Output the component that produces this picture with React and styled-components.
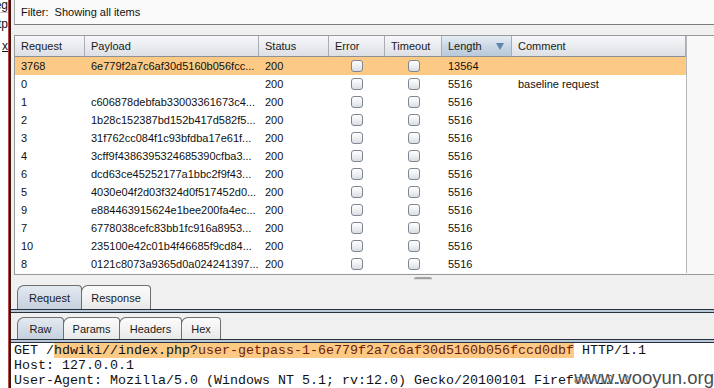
import React from "react";
import styled, { createGlobalStyle } from "styled-components";

const GlobalStyle = createGlobalStyle`
  html, body {
    margin: 0;
    padding: 0;
    width: 714px;
    height: 388px;
    overflow: hidden;
    background: #ffffff;
    font-family: "Liberation Sans", Arial, sans-serif;
  }
`;

const Frame = styled.div`
  position: relative;
  display: flex;
  width: 714px;
  height: 388px;
  overflow: hidden;
`;

const SideStrip = styled.div`
  width: 8px;
  flex-shrink: 0;
  display: flex;
  flex-direction: column;
  background: #ffffff;
  overflow: hidden;
`;

const SideItem = styled.div`
  height: ${({ $h }) => $h}px;
  display: flex;
  justify-content: flex-end;
  align-items: ${({ $align }) => $align || "center"};
  font-size: 12px;
  color: #111;
  white-space: nowrap;
  border-bottom: ${({ $line }) => ($line ? "1px solid #c8c8c8" : "none")};
  text-decoration: ${({ $underline }) => ($underline ? "underline" : "none")};
`;

const Divider = styled.div`
  width: 3px;
  flex-shrink: 0;
  background: linear-gradient(to right, #b34a44 0, #b34a44 1px, #3e1612 1px);
`;

const Main = styled.div`
  flex: 1;
  min-width: 0;
  display: flex;
  flex-direction: column;
  background: #f0f0f0;
`;

const FilterBar = styled.div`
  height: 23px;
  margin-left: 3px;
  display: flex;
  align-items: center;
  padding-left: 6px;
  padding-bottom: 1px;
  background: #fafafa;
  border-left: 1px solid #a8a8a8;
  border-bottom: 1px solid #7c7c7c;
  font-size: 11px;
  color: #111;
  white-space: pre;
`;

const Table = styled.div`
  box-sizing: border-box;
  height: 240px;
  margin-top: 10px;
  margin-left: 3px;
  background: #f8f8f8;
  border-top: 1px solid #9a9a9a;
  border-left: 1px solid #9a9a9a;
  border-bottom: 1px solid #9a9a9a;
  overflow: hidden;
`;

const Grid = styled.div`
  display: grid;
  grid-template-columns: 70px 174px 70px 56px 57px 70px 174px;
  width: 671px;
  background: #ffffff;
  border-right: 1px solid #b8b8b8;
`;

const HeaderCell = styled.div`
  box-sizing: border-box;
  height: 21px;
  display: flex;
  align-items: center;
  justify-content: space-between;
  padding: 0 6px;
  font-size: 11px;
  color: #1a1a1a;
  border-right: 1px solid #a9adb3;
  border-bottom: 1px solid #8d9196;
  background: ${({ $sorted }) =>
    $sorted
      ? "linear-gradient(to bottom, #e6edf5 0%, #c9d6e4 55%, #b9c9da 100%)"
      : "linear-gradient(to bottom, #f7f8fa 0%, #e9ebef 55%, #dcdfe4 100%)"};
  &:last-child {
    border-right: none;
  }
`;

const SortArrow = styled.span`
  width: 0;
  height: 0;
  margin-right: 1px;
  border-left: 4px solid transparent;
  border-right: 4px solid transparent;
  border-top: 7px solid #5f84ad;
`;

const Cell = styled.div`
  height: 18px;
  display: flex;
  align-items: center;
  justify-content: ${({ $center }) => ($center ? "center" : "flex-start")};
  padding: 0 ${({ $center }) => ($center ? "0" : "6px")};
  font-size: 11px;
  color: #111;
  white-space: nowrap;
  overflow: hidden;
  background: ${({ $selected }) => ($selected ? "#fdca86" : "transparent")};
`;

const Checkbox = styled.span`
  box-sizing: border-box;
  width: 12px;
  height: 12px;
  border: 1px solid #7d8692;
  border-radius: 3px;
  background: linear-gradient(to bottom, #ffffff 0%, #eef0f3 50%, #d9dde2 100%);
`;

const Splitter = styled.div`
  height: 10px;
  display: flex;
  justify-content: center;
  padding-left: 120px;
`;

const Handle = styled.div`
  width: 18px;
  height: 2px;
  margin-top: 2px;
  border-radius: 2px 2px 0 0;
  background: #a4a4a4;
  border-bottom: 1px solid #dcdcdc;
`;

const TabBar = styled.div`
  height: ${({ $h }) => $h}px;
  margin-top: ${({ $gap }) => $gap}px;
  display: flex;
  align-items: flex-end;
  padding-left: 6px;
`;

const Tab = styled.div`
  box-sizing: border-box;
  width: ${({ $w }) => $w}px;
  height: 100%;
  display: flex;
  align-items: center;
  justify-content: center;
  margin-right: -1px;
  font-size: 11px;
  color: #1a1a1a;
  border: 1px solid #6f6f6f;
  border-bottom: none;
  border-radius: 7px 4px 0 0;
  background: ${({ $active }) =>
    $active
      ? "linear-gradient(to bottom, #e4eaf1 0%, #d1dae5 60%, #c6d1de 100%)"
      : "linear-gradient(to bottom, #fbfbfb 0%, #f1f1f1 60%, #e8e8e8 100%)"};
`;

const TabRule = styled.div`
  height: 2px;
  background: #b9c7d6;
  border-top: 1px solid #26313d;
  border-bottom: 1px solid #26313d;
`;

const Editor = styled.div`
  flex: 1;
  padding-left: 3px;
  background: #ffffff;
  font-family: "Liberation Mono", "Courier New", monospace;
  font-size: 13.33px;
  line-height: 15px;
  color: #111;
  white-space: pre;
`;

const Line = styled.div`
  height: 15px;
`;

const Mark = styled.span`
  background: #fdca86;
  color: ${({ $param }) => ($param ? "#6e1d08" : "#111")};
`;

const Watermark = styled.div`
  position: absolute;
  right: 0;
  bottom: -1px;
  font-family: "Liberation Sans", Arial, sans-serif;
  font-size: 18.5px;
  color: #4c4c4c;
  text-shadow: 0 0 2px #ffffff, 0 0 2px #ffffff;
  white-space: nowrap;
`;

const columns = [
  { label: "Request" },
  { label: "Payload" },
  { label: "Status" },
  { label: "Error" },
  { label: "Timeout" },
  { label: "Length", sorted: true },
  { label: "Comment" },
];

const rows = [
  ["3768", "6e779f2a7c6af30d5160b056fcc...", "200", "13564", ""],
  ["0", "", "200", "5516", "baseline request"],
  ["1", "c606878debfab33003361673c4...", "200", "5516", ""],
  ["2", "1b28c152387bd152b417d582f5...", "200", "5516", ""],
  ["3", "31f762cc084f1c93bfdba17e61f...", "200", "5516", ""],
  ["4", "3cff9f4386395324685390cfba3...", "200", "5516", ""],
  ["6", "dcd63ce45252177a1bbc2f9f43...", "200", "5516", ""],
  ["5", "4030e04f2d03f324d0f517452d0...", "200", "5516", ""],
  ["9", "e884463915624e1bee200fa4ec...", "200", "5516", ""],
  ["7", "6778038cefc83bb1fc916a8953...", "200", "5516", ""],
  ["10", "235100e42c01b4f46685f9cd84...", "200", "5516", ""],
  ["8", "0121c8073a9365d0a024241397...", "200", "5516", ""],
];

function App() {
  return (
    <Frame>
      <GlobalStyle />
      <SideStrip>
        <SideItem $h={12} $align="flex-end" $line>
          eg
        </SideItem>
        <SideItem $h={22}>tp</SideItem>
        <SideItem $h={22} $underline>
          x
        </SideItem>
      </SideStrip>
      <Divider />
      <Main>
        <FilterBar>Filter:  Showing all items</FilterBar>

        <Table>
          <Grid>
            {columns.map((c) => (
              <HeaderCell key={c.label} $sorted={c.sorted}>
                {c.label}
                {c.sorted && <SortArrow />}
              </HeaderCell>
            ))}
            {rows.map((r, i) => {
              const sel = i === 0;
              return (
                <React.Fragment key={r[0]}>
                  <Cell $selected={sel}>{r[0]}</Cell>
                  <Cell $selected={sel}>{r[1]}</Cell>
                  <Cell $selected={sel}>{r[2]}</Cell>
                  <Cell $selected={sel} $center>
                    <Checkbox />
                  </Cell>
                  <Cell $selected={sel} $center>
                    <Checkbox />
                  </Cell>
                  <Cell $selected={sel}>{r[3]}</Cell>
                  <Cell $selected={sel}>{r[4]}</Cell>
                </React.Fragment>
              );
            })}
          </Grid>
        </Table>

        <Splitter>
          <Handle />
        </Splitter>

        <TabBar $h={24} $gap={0}>
          <Tab $w={65} $active>
            Request
          </Tab>
          <Tab $w={70}>Response</Tab>
        </TabBar>
        <TabRule />

        <TabBar $h={22} $gap={4}>
          <Tab $w={47} $active>
            Raw
          </Tab>
          <Tab $w={57}>Params</Tab>
          <Tab $w={63}>Headers</Tab>
          <Tab $w={40}>Hex</Tab>
        </TabBar>
        <TabRule />

        <Editor>
          <Line>
            GET /<Mark>hdwiki//index.php?</Mark>
            <Mark $param>user-getpass-1-6e779f2a7c6af30d5160b056fccd0dbf</Mark> HTTP/1.1
          </Line>
          <Line>Host: 127.0.0.1</Line>
          <Line>User-Agent: Mozilla/5.0 (Windows NT 5.1; rv:12.0) Gecko/20100101 Firefox/12.0</Line>
        </Editor>
      </Main>
      <Watermark>www.wooyun.org</Watermark>
    </Frame>
  );
}

export default App;
